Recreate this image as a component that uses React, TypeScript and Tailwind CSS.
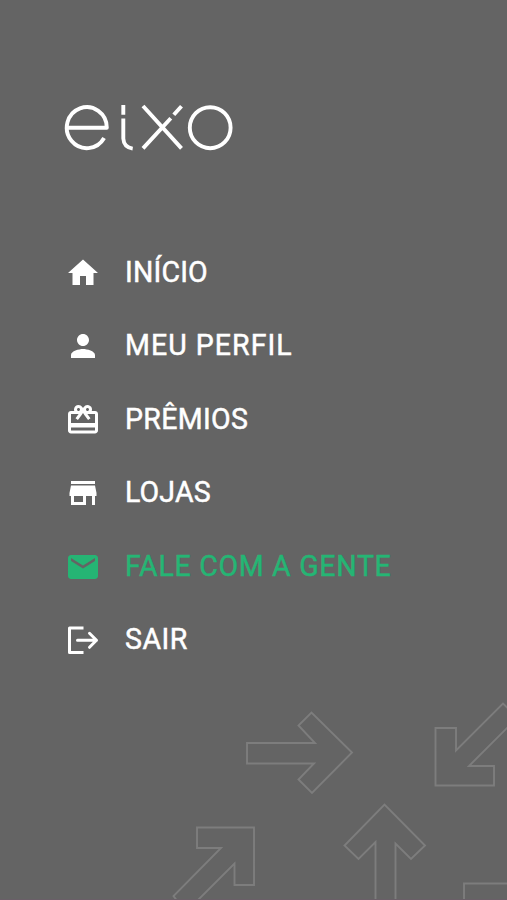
import { ReactNode } from "react";
import { MdEmail, MdHome, MdPerson, MdRedeem, MdStore } from "react-icons/md";

const Logo = () => {
  return (
    <svg
      width="170"
      height="48"
      viewBox="0 0 170 48"
      fill="none"
      stroke="#fff"
      strokeWidth="3.9"
      className="ml-16"
    >
      <path d="M2.8 24.7H42.8A20 20.5 0 1 0 40.1 34.95" strokeLinejoin="round" />
      <path d="M59.3 2V11.7M59.3 15.5V35.5Q59.8 44.3 68.7 45.6" />
      <path d="M79 3L117.5 45.4M79 45.4L106.8 15.2M109.8 11.8L117.5 3.2" />
      <ellipse cx="146.2" cy="24.7" rx="20.4" ry="20.5" />
    </svg>
  );
};

const ExitIcon = () => {
  return (
    <svg
      width="36"
      height="36"
      viewBox="0 0 36 36"
      fill="none"
      stroke="currentColor"
      strokeWidth="3"
      strokeLinejoin="round"
    >
      <path d="M18.5 6H4.5V30.5H18.5" />
      <path d="M12.5 18.3H31.5M24.5 11.3L31.5 18.3L24.5 25.3" strokeLinecap="round" />
    </svg>
  );
};

type Item = {
  label: string;
  icon: ReactNode;
  spacing: string;
  active?: boolean;
};

const items: Item[] = [
  { label: "INÍCIO", icon: <MdHome size={36} />, spacing: "tracking-[0.2px]" },
  { label: "MEU PERFIL", icon: <MdPerson size={36} />, spacing: "tracking-[1.1px]" },
  { label: "PRÊMIOS", icon: <MdRedeem size={36} />, spacing: "tracking-[0.35px]" },
  { label: "LOJAS", icon: <MdStore size={36} />, spacing: "tracking-[0.15px]" },
  {
    label: "FALE COM A GENTE",
    icon: <MdEmail size={36} />,
    spacing: "tracking-[0.75px]",
    active: true,
  },
  { label: "SAIR", icon: <ExitIcon />, spacing: "tracking-[0.5px]" },
];

const Arrows = () => {
  return (
    <svg
      width="507"
      height="210"
      viewBox="0 690 507 210"
      fill="none"
      stroke="#7d7d7d"
      strokeWidth="1.9"
      className="absolute -bottom-px left-0"
    >
      <path d="M247 743H315L298.5 725.5L311.5 712.5L352 752.5L312 793L298.5 779.5L314 763.5H247Z" />
      <path d="M515 715L503 703.5L456 750.5V728H435.5V785.5H494V766H469L515 720" />
      <path d="M184 910L173.5 896L221 848H197V827.5H254V885H234.5V863.5L190 908" />
      <path d="M375.5 910V842L358.5 859L344.5 845.5L384.5 804.5L425 845.5L411 859L395.5 843.5V910" />
      <path d="M464 910V883.5H520" />
    </svg>
  );
};

const App = () => {
  return (
    <div className="relative w-full h-[900px] overflow-hidden border-b border-[#6a5f68] bg-[#646464] pt-[103px] font-['Roboto',sans-serif]">
      <Arrows />
      <Logo />
      <nav className="mt-[94px] flex flex-col">
        {items.map((item) => (
          <a
            key={item.label}
            className={`flex h-[73.5px] items-center gap-6 pl-[65px] ${
              item.active ? "text-[#25b574]" : "text-white"
            }`}
          >
            <span className="shrink-0 mb-[18px]">{item.icon}</span>
            <span
              className={`mb-[20px] origin-left scale-x-95 whitespace-nowrap text-[30px] leading-9 [-webkit-text-stroke:0.5px] ${item.spacing}`}
            >
              {item.label}
            </span>
          </a>
        ))}
      </nav>
    </div>
  );
};

export default App;
